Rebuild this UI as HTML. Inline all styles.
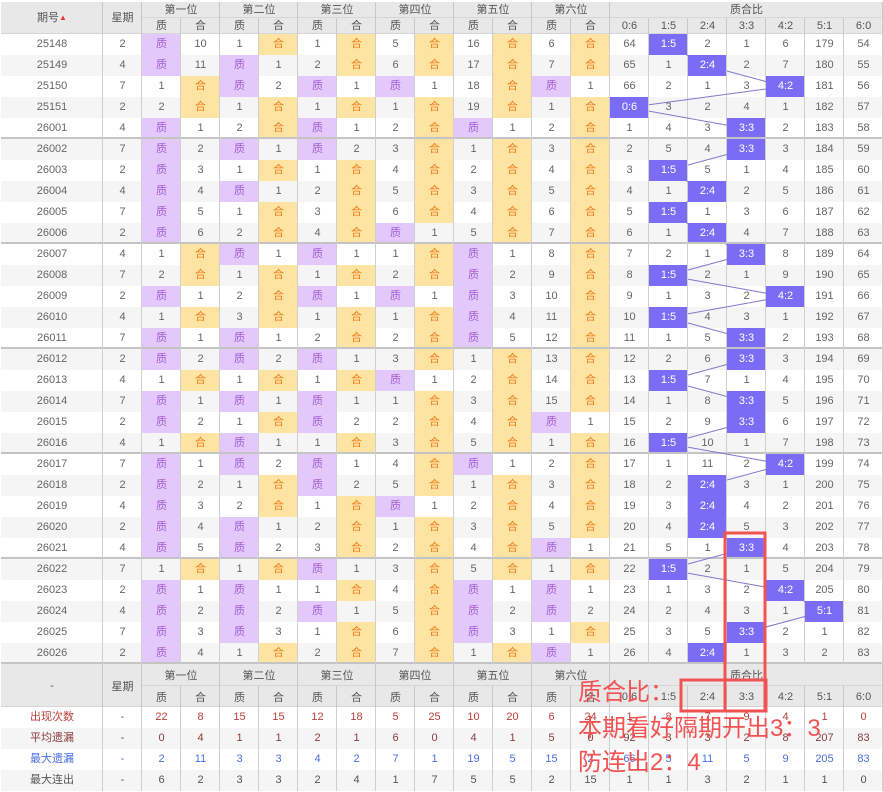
<!DOCTYPE html>
<html><head><meta charset="utf-8">
<style>
*{box-sizing:border-box}
body{margin:0;width:883px;height:792px;background:#fff;position:relative;overflow:hidden;font-family:"Liberation Sans","Noto Sans CJK SC",sans-serif}
table{position:absolute;left:1px;top:2px;width:882px;border-collapse:collapse;table-layout:fixed}
td,th{padding:0;text-align:center;font-size:11px;color:#666;font-weight:400;box-shadow:inset -1px 0 #cfcfcf;white-space:nowrap;overflow:hidden}
thead th{background:#e8e8e8;color:#555;height:16px;line-height:16px;box-shadow:inset -1px 0 #c8c8c8,inset 0 -1px #d6d6d6;font-weight:400}
tbody td{height:21px;line-height:21px}
tbody tr:nth-child(even) td{background:#f5f5f5}
tbody tr.g td{box-shadow:inset -1px 0 #cfcfcf,inset 0 -2px #c4c4c4}
tbody td.p{background:#e2c8fb!important;color:#a25fd2}
tbody td.y{background:#fde4a2!important;color:#f07c1c}
tbody td.h{background:#7b6cf6!important;color:#fff;position:relative;z-index:2}
tfoot th{background:#e8e8e8;color:#555;box-shadow:inset -1px 0 #c8c8c8,inset 0 -1px #d6d6d6;font-weight:400}
tfoot tr.h1 th{height:22px}
tfoot tr.h2 th{height:21px}
tfoot td{height:21px;line-height:21px}
tfoot tr.s:nth-child(even) td{background:#f5f5f5}
.c1 td{color:#b8403a}.c2 td{color:#8a3c3c}.c3 td{color:#4a6ee0}.c4 td{color:#555}
.arr{color:#e33;font-size:8px;vertical-align:1px}
.ov{position:absolute;left:578px;font-size:24px;line-height:28px;color:#f25252;font-family:"Liberation Sans","Noto Sans CJK SC",sans-serif;white-space:nowrap;z-index:5}
svg{z-index:1}
</style></head><body>
<table>
<colgroup><col style="width:102px"><col style="width:39px">
<col style="width:39px"><col style="width:39px"><col style="width:39px"><col style="width:39px"><col style="width:39px"><col style="width:39px"><col style="width:39px"><col style="width:39px"><col style="width:39px"><col style="width:39px"><col style="width:39px"><col style="width:39px">
<col style="width:39px"><col style="width:39px"><col style="width:39px"><col style="width:39px"><col style="width:39px"><col style="width:39px"><col style="width:39px"></colgroup>
<thead>
<tr><th rowspan="2">期号<span class="arr">▲</span></th><th rowspan="2">星期</th><th colspan="2">第一位</th><th colspan="2">第二位</th><th colspan="2">第三位</th><th colspan="2">第四位</th><th colspan="2">第五位</th><th colspan="2">第六位</th><th colspan="7">质合比</th></tr>
<tr><th>质</th><th>合</th><th>质</th><th>合</th><th>质</th><th>合</th><th>质</th><th>合</th><th>质</th><th>合</th><th>质</th><th>合</th><th>0:6</th><th>1:5</th><th>2:4</th><th>3:3</th><th>4:2</th><th>5:1</th><th>6:0</th></tr>
</thead>
<tbody>
<tr><td>25148</td><td>2</td><td class="p">质</td><td>10</td><td>1</td><td class="y">合</td><td>1</td><td class="y">合</td><td>5</td><td class="y">合</td><td>16</td><td class="y">合</td><td>6</td><td class="y">合</td><td>64</td><td class="h">1:5</td><td>2</td><td>1</td><td>6</td><td>179</td><td>54</td></tr>
<tr><td>25149</td><td>4</td><td class="p">质</td><td>11</td><td class="p">质</td><td>1</td><td>2</td><td class="y">合</td><td>6</td><td class="y">合</td><td>17</td><td class="y">合</td><td>7</td><td class="y">合</td><td>65</td><td>1</td><td class="h">2:4</td><td>2</td><td>7</td><td>180</td><td>55</td></tr>
<tr><td>25150</td><td>7</td><td>1</td><td class="y">合</td><td class="p">质</td><td>2</td><td class="p">质</td><td>1</td><td class="p">质</td><td>1</td><td>18</td><td class="y">合</td><td class="p">质</td><td>1</td><td>66</td><td>2</td><td>1</td><td>3</td><td class="h">4:2</td><td>181</td><td>56</td></tr>
<tr><td>25151</td><td>2</td><td>2</td><td class="y">合</td><td>1</td><td class="y">合</td><td>1</td><td class="y">合</td><td>1</td><td class="y">合</td><td>19</td><td class="y">合</td><td>1</td><td class="y">合</td><td class="h">0:6</td><td>3</td><td>2</td><td>4</td><td>1</td><td>182</td><td>57</td></tr>
<tr class="g"><td>26001</td><td>4</td><td class="p">质</td><td>1</td><td>2</td><td class="y">合</td><td class="p">质</td><td>1</td><td>2</td><td class="y">合</td><td class="p">质</td><td>1</td><td>2</td><td class="y">合</td><td>1</td><td>4</td><td>3</td><td class="h">3:3</td><td>2</td><td>183</td><td>58</td></tr>
<tr><td>26002</td><td>7</td><td class="p">质</td><td>2</td><td class="p">质</td><td>1</td><td class="p">质</td><td>2</td><td>3</td><td class="y">合</td><td>1</td><td class="y">合</td><td>3</td><td class="y">合</td><td>2</td><td>5</td><td>4</td><td class="h">3:3</td><td>3</td><td>184</td><td>59</td></tr>
<tr><td>26003</td><td>2</td><td class="p">质</td><td>3</td><td>1</td><td class="y">合</td><td>1</td><td class="y">合</td><td>4</td><td class="y">合</td><td>2</td><td class="y">合</td><td>4</td><td class="y">合</td><td>3</td><td class="h">1:5</td><td>5</td><td>1</td><td>4</td><td>185</td><td>60</td></tr>
<tr><td>26004</td><td>4</td><td class="p">质</td><td>4</td><td class="p">质</td><td>1</td><td>2</td><td class="y">合</td><td>5</td><td class="y">合</td><td>3</td><td class="y">合</td><td>5</td><td class="y">合</td><td>4</td><td>1</td><td class="h">2:4</td><td>2</td><td>5</td><td>186</td><td>61</td></tr>
<tr><td>26005</td><td>7</td><td class="p">质</td><td>5</td><td>1</td><td class="y">合</td><td>3</td><td class="y">合</td><td>6</td><td class="y">合</td><td>4</td><td class="y">合</td><td>6</td><td class="y">合</td><td>5</td><td class="h">1:5</td><td>1</td><td>3</td><td>6</td><td>187</td><td>62</td></tr>
<tr class="g"><td>26006</td><td>2</td><td class="p">质</td><td>6</td><td>2</td><td class="y">合</td><td>4</td><td class="y">合</td><td class="p">质</td><td>1</td><td>5</td><td class="y">合</td><td>7</td><td class="y">合</td><td>6</td><td>1</td><td class="h">2:4</td><td>4</td><td>7</td><td>188</td><td>63</td></tr>
<tr><td>26007</td><td>4</td><td>1</td><td class="y">合</td><td class="p">质</td><td>1</td><td class="p">质</td><td>1</td><td>1</td><td class="y">合</td><td class="p">质</td><td>1</td><td>8</td><td class="y">合</td><td>7</td><td>2</td><td>1</td><td class="h">3:3</td><td>8</td><td>189</td><td>64</td></tr>
<tr><td>26008</td><td>7</td><td>2</td><td class="y">合</td><td>1</td><td class="y">合</td><td>1</td><td class="y">合</td><td>2</td><td class="y">合</td><td class="p">质</td><td>2</td><td>9</td><td class="y">合</td><td>8</td><td class="h">1:5</td><td>2</td><td>1</td><td>9</td><td>190</td><td>65</td></tr>
<tr><td>26009</td><td>2</td><td class="p">质</td><td>1</td><td>2</td><td class="y">合</td><td class="p">质</td><td>1</td><td class="p">质</td><td>1</td><td class="p">质</td><td>3</td><td>10</td><td class="y">合</td><td>9</td><td>1</td><td>3</td><td>2</td><td class="h">4:2</td><td>191</td><td>66</td></tr>
<tr><td>26010</td><td>4</td><td>1</td><td class="y">合</td><td>3</td><td class="y">合</td><td>1</td><td class="y">合</td><td>1</td><td class="y">合</td><td class="p">质</td><td>4</td><td>11</td><td class="y">合</td><td>10</td><td class="h">1:5</td><td>4</td><td>3</td><td>1</td><td>192</td><td>67</td></tr>
<tr class="g"><td>26011</td><td>7</td><td class="p">质</td><td>1</td><td class="p">质</td><td>1</td><td>2</td><td class="y">合</td><td>2</td><td class="y">合</td><td class="p">质</td><td>5</td><td>12</td><td class="y">合</td><td>11</td><td>1</td><td>5</td><td class="h">3:3</td><td>2</td><td>193</td><td>68</td></tr>
<tr><td>26012</td><td>2</td><td class="p">质</td><td>2</td><td class="p">质</td><td>2</td><td class="p">质</td><td>1</td><td>3</td><td class="y">合</td><td>1</td><td class="y">合</td><td>13</td><td class="y">合</td><td>12</td><td>2</td><td>6</td><td class="h">3:3</td><td>3</td><td>194</td><td>69</td></tr>
<tr><td>26013</td><td>4</td><td>1</td><td class="y">合</td><td>1</td><td class="y">合</td><td>1</td><td class="y">合</td><td class="p">质</td><td>1</td><td>2</td><td class="y">合</td><td>14</td><td class="y">合</td><td>13</td><td class="h">1:5</td><td>7</td><td>1</td><td>4</td><td>195</td><td>70</td></tr>
<tr><td>26014</td><td>7</td><td class="p">质</td><td>1</td><td class="p">质</td><td>1</td><td class="p">质</td><td>1</td><td>1</td><td class="y">合</td><td>3</td><td class="y">合</td><td>15</td><td class="y">合</td><td>14</td><td>1</td><td>8</td><td class="h">3:3</td><td>5</td><td>196</td><td>71</td></tr>
<tr><td>26015</td><td>2</td><td class="p">质</td><td>2</td><td>1</td><td class="y">合</td><td class="p">质</td><td>2</td><td>2</td><td class="y">合</td><td>4</td><td class="y">合</td><td class="p">质</td><td>1</td><td>15</td><td>2</td><td>9</td><td class="h">3:3</td><td>6</td><td>197</td><td>72</td></tr>
<tr class="g"><td>26016</td><td>4</td><td>1</td><td class="y">合</td><td class="p">质</td><td>1</td><td>1</td><td class="y">合</td><td>3</td><td class="y">合</td><td>5</td><td class="y">合</td><td>1</td><td class="y">合</td><td>16</td><td class="h">1:5</td><td>10</td><td>1</td><td>7</td><td>198</td><td>73</td></tr>
<tr><td>26017</td><td>7</td><td class="p">质</td><td>1</td><td class="p">质</td><td>2</td><td class="p">质</td><td>1</td><td>4</td><td class="y">合</td><td class="p">质</td><td>1</td><td>2</td><td class="y">合</td><td>17</td><td>1</td><td>11</td><td>2</td><td class="h">4:2</td><td>199</td><td>74</td></tr>
<tr><td>26018</td><td>2</td><td class="p">质</td><td>2</td><td>1</td><td class="y">合</td><td class="p">质</td><td>2</td><td>5</td><td class="y">合</td><td>1</td><td class="y">合</td><td>3</td><td class="y">合</td><td>18</td><td>2</td><td class="h">2:4</td><td>3</td><td>1</td><td>200</td><td>75</td></tr>
<tr><td>26019</td><td>4</td><td class="p">质</td><td>3</td><td>2</td><td class="y">合</td><td>1</td><td class="y">合</td><td class="p">质</td><td>1</td><td>2</td><td class="y">合</td><td>4</td><td class="y">合</td><td>19</td><td>3</td><td class="h">2:4</td><td>4</td><td>2</td><td>201</td><td>76</td></tr>
<tr><td>26020</td><td>2</td><td class="p">质</td><td>4</td><td class="p">质</td><td>1</td><td>2</td><td class="y">合</td><td>1</td><td class="y">合</td><td>3</td><td class="y">合</td><td>5</td><td class="y">合</td><td>20</td><td>4</td><td class="h">2:4</td><td>5</td><td>3</td><td>202</td><td>77</td></tr>
<tr class="g"><td>26021</td><td>4</td><td class="p">质</td><td>5</td><td class="p">质</td><td>2</td><td>3</td><td class="y">合</td><td>2</td><td class="y">合</td><td>4</td><td class="y">合</td><td class="p">质</td><td>1</td><td>21</td><td>5</td><td>1</td><td class="h">3:3</td><td>4</td><td>203</td><td>78</td></tr>
<tr><td>26022</td><td>7</td><td>1</td><td class="y">合</td><td>1</td><td class="y">合</td><td class="p">质</td><td>1</td><td>3</td><td class="y">合</td><td>5</td><td class="y">合</td><td>1</td><td class="y">合</td><td>22</td><td class="h">1:5</td><td>2</td><td>1</td><td>5</td><td>204</td><td>79</td></tr>
<tr><td>26023</td><td>2</td><td class="p">质</td><td>1</td><td class="p">质</td><td>1</td><td>1</td><td class="y">合</td><td>4</td><td class="y">合</td><td class="p">质</td><td>1</td><td class="p">质</td><td>1</td><td>23</td><td>1</td><td>3</td><td>2</td><td class="h">4:2</td><td>205</td><td>80</td></tr>
<tr><td>26024</td><td>4</td><td class="p">质</td><td>2</td><td class="p">质</td><td>2</td><td class="p">质</td><td>1</td><td>5</td><td class="y">合</td><td class="p">质</td><td>2</td><td class="p">质</td><td>2</td><td>24</td><td>2</td><td>4</td><td>3</td><td>1</td><td class="h">5:1</td><td>81</td></tr>
<tr><td>26025</td><td>7</td><td class="p">质</td><td>3</td><td class="p">质</td><td>3</td><td>1</td><td class="y">合</td><td>6</td><td class="y">合</td><td class="p">质</td><td>3</td><td>1</td><td class="y">合</td><td>25</td><td>3</td><td>5</td><td class="h">3:3</td><td>2</td><td>1</td><td>82</td></tr>
<tr class="g"><td>26026</td><td>2</td><td class="p">质</td><td>4</td><td>1</td><td class="y">合</td><td>2</td><td class="y">合</td><td>7</td><td class="y">合</td><td>1</td><td class="y">合</td><td class="p">质</td><td>1</td><td>26</td><td>4</td><td class="h">2:4</td><td>1</td><td>3</td><td>2</td><td>83</td></tr>
</tbody>
<tfoot>
<tr class="h1"><th rowspan="2">-</th><th rowspan="2">星期</th><th colspan="2">第一位</th><th colspan="2">第二位</th><th colspan="2">第三位</th><th colspan="2">第四位</th><th colspan="2">第五位</th><th colspan="2">第六位</th><th colspan="7">质合比</th></tr>
<tr class="h2"><th>质</th><th>合</th><th>质</th><th>合</th><th>质</th><th>合</th><th>质</th><th>合</th><th>质</th><th>合</th><th>质</th><th>合</th><th>0:6</th><th>1:5</th><th>2:4</th><th>3:3</th><th>4:2</th><th>5:1</th><th>6:0</th></tr>
<tr class="s c1"><td>出现次数</td><td>-</td><td>22</td><td>8</td><td>15</td><td>15</td><td>12</td><td>18</td><td>5</td><td>25</td><td>10</td><td>20</td><td>6</td><td>24</td><td>1</td><td>8</td><td>7</td><td>9</td><td>4</td><td>1</td><td>0</td></tr>
<tr class="s c2"><td>平均遗漏</td><td>-</td><td>0</td><td>4</td><td>1</td><td>1</td><td>2</td><td>1</td><td>6</td><td>0</td><td>4</td><td>1</td><td>5</td><td>0</td><td>92</td><td>3</td><td>3</td><td>2</td><td>8</td><td>207</td><td>83</td></tr>
<tr class="s c3"><td>最大遗漏</td><td>-</td><td>2</td><td>11</td><td>3</td><td>3</td><td>4</td><td>2</td><td>7</td><td>1</td><td>19</td><td>5</td><td>15</td><td>2</td><td>66</td><td>5</td><td>11</td><td>5</td><td>9</td><td>205</td><td>83</td></tr>
<tr class="s c4"><td>最大连出</td><td>-</td><td>6</td><td>2</td><td>3</td><td>3</td><td>2</td><td>4</td><td>1</td><td>7</td><td>5</td><td>5</td><td>2</td><td>15</td><td>1</td><td>1</td><td>3</td><td>2</td><td>1</td><td>1</td><td>0</td></tr>
</tfoot>
</table>
<svg width="883" height="792" style="position:absolute;left:0;top:0">
<polyline fill="none" stroke="#7f78d0" stroke-width="1" points="667.5,44.5 706.5,65.5 784.5,86.5 628.5,107.5 745.5,128.5 745.5,149.5 667.5,170.5 706.5,191.5 667.5,212.5 706.5,233.5 745.5,254.5 667.5,275.5 784.5,296.5 667.5,317.5 745.5,338.5 745.5,359.5 667.5,380.5 745.5,401.5 745.5,422.5 667.5,443.5 784.5,464.5 706.5,485.5 706.5,506.5 706.5,527.5 745.5,548.5 667.5,569.5 784.5,590.5 823.5,611.5 745.5,632.5 706.5,653.5"/>
</svg>
<svg width="883" height="792" style="position:absolute;left:0;top:0;z-index:4">
<g fill="none" stroke="#f25252" stroke-width="3">
<rect x="725" y="533" width="40" height="178"/>
<rect x="681" y="680" width="85" height="31"/>
</g>
</svg>
<div class="ov" style="top:679px">质合比：</div>
<div class="ov" style="top:715px">本期看好隔期开出3：3</div>
<div class="ov" style="top:749px">防连出2：4</div>
</body></html>
